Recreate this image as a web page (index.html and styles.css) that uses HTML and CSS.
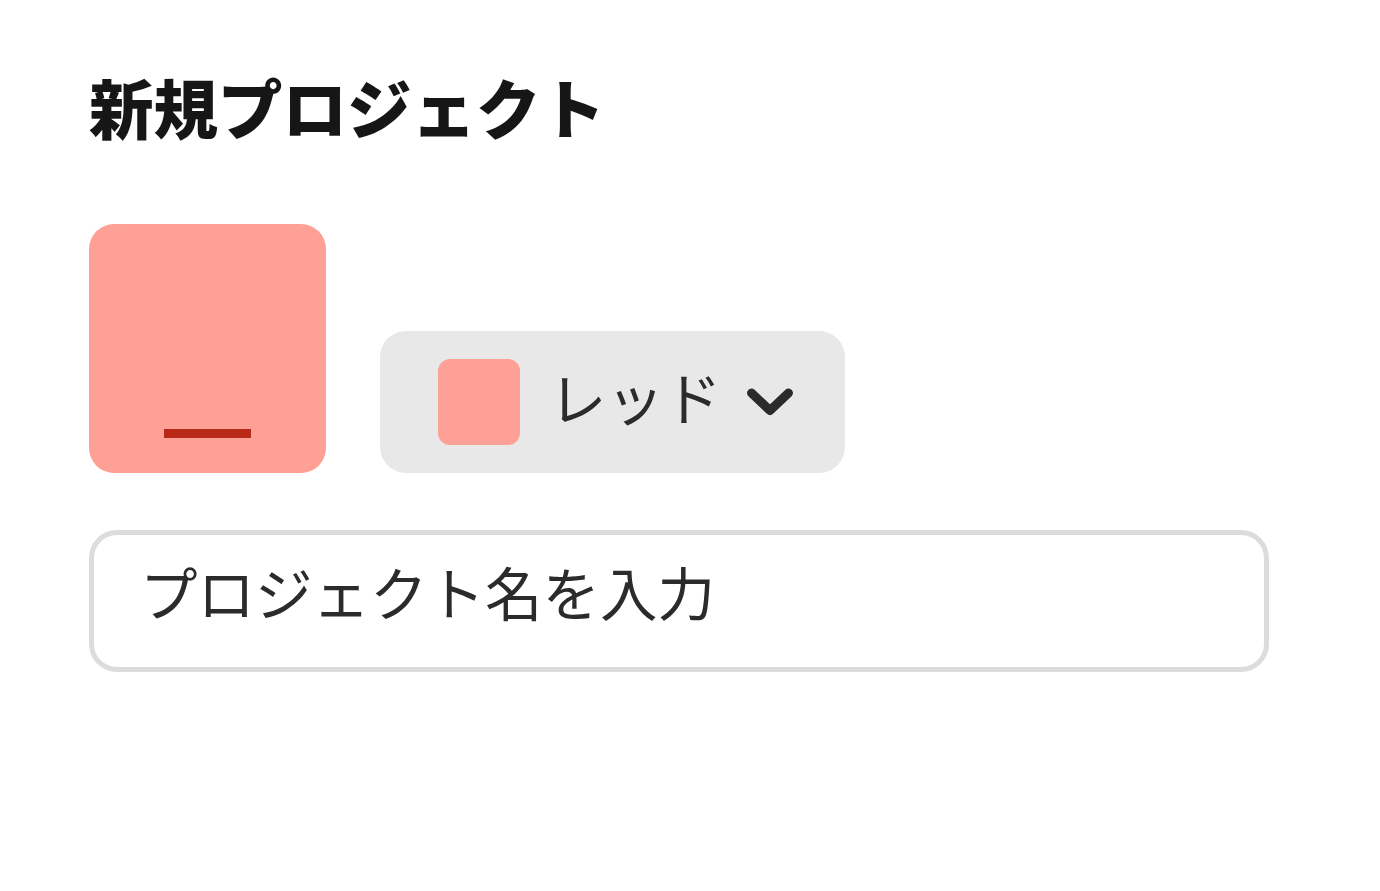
FILE: index.html
```html
<!DOCTYPE html>
<html lang="ja">
<head>
  <meta charset="UTF-8">
  <meta name="viewport" content="width=device-width, initial-scale=1.0">
  <title>新規プロジェクト</title>
  <link rel="stylesheet" href="styles.css">
</head>
<body>

<div class="panel">
  <h1 class="title">新規プロジェクト</h1>

  <div class="color-row">
    <div class="preview">
      <span class="preview-bar"></span>
    </div>
    <button class="color-select" type="button">
      <span class="swatch"></span>
      <span class="color-name">レッド</span>
      <svg class="chevron" viewBox="0 0 48 30" aria-hidden="true">
        <path d="M5.5 6 L24 23.5 L42.5 6" fill="none" stroke="#2b2b2b" stroke-width="9" stroke-linecap="round" stroke-linejoin="round"/>
      </svg>
    </button>
  </div>

  <input class="name-input" type="text" placeholder="プロジェクト名を入力">
</div>

</body>
</html>
```

FILE: styles.css
```css
* {
  box-sizing: border-box;
}

body {
  margin: 0;
  background-color: #fff;
  font-family: "Noto Sans CJK JP", "Noto Sans", sans-serif;
}

.panel {
  width: 1380px;
  padding: 68px 111px 0 89px;
}

.title {
  margin: 0;
  height: 76px;
  font-size: 64.5px;
  line-height: 76px;
  font-weight: 900;
  color: #161616;
}

.color-row {
  display: flex;
  align-items: flex-end;
  gap: 54px;
  margin-top: 80px;
}

.preview {
  display: flex;
  align-items: flex-end;
  justify-content: center;
  width: 237px;
  height: 249px;
  padding-bottom: 35px;
  background-color: #ffa096;
  border-radius: 25px;
}

.preview-bar {
  width: 87px;
  height: 9px;
  background-color: #b82a17;
}

.color-select {
  display: flex;
  align-items: center;
  width: 465px;
  height: 142px;
  padding: 0 0 0 58px;
  border: none;
  border-radius: 26px;
  background-color: #e8e8e8;
  font-family: inherit;
}

.swatch {
  width: 82px;
  height: 86px;
  background-color: #ffa096;
  border-radius: 12px;
}

.color-name {
  margin-left: 29px;
  padding-bottom: 12px;
  font-size: 57.5px;
  color: #2b2b2b;
}

.chevron {
  width: 48px;
  height: 30px;
  margin-left: 24px;
}

.name-input {
  display: block;
  width: 1180px;
  height: 142px;
  margin-top: 57px;
  padding: 0 0 20px 46px;
  border: 5px solid #dcdcdc;
  border-radius: 28px;
  background-color: #fff;
  font-family: inherit;
  font-size: 57.5px;
  color: #2b2b2b;
  outline: none;
}

.name-input::placeholder {
  color: #2b2b2b;
  opacity: 1;
}
```
